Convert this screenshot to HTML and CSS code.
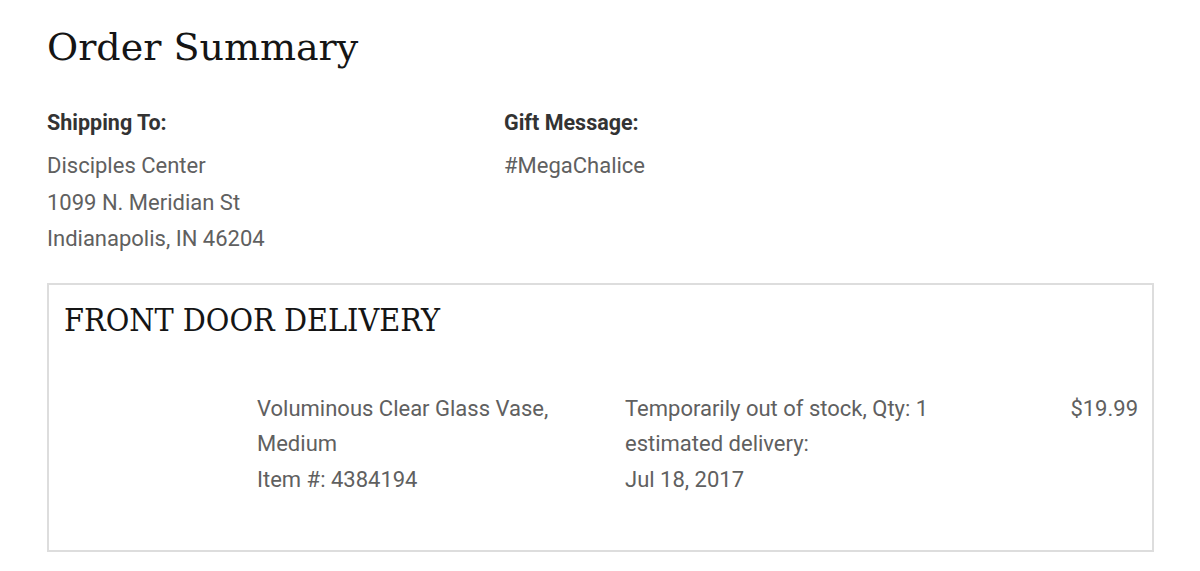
FILE: index.html
```html
<!DOCTYPE html>
<html lang="en">
<head>
  <meta charset="UTF-8">
  <meta name="viewport" content="width=device-width, initial-scale=1.0">
  <link rel="stylesheet" href="styles.css">
  <title>Order Summary</title>
</head>
<body>

  <div class="summary_wrap">

    <h1 class="summary_title">Order Summary</h1>

    <!-- address and gift message -->
    <section class="summary_info">
      <div class="info_col">
        <h3 class="info_label">Shipping To:</h3>
        <p class="info_text">Disciples Center<br>1099 N. Meridian St<br>Indianapolis, IN 46204</p>
      </div>
      <div class="info_col">
        <h3 class="info_label">Gift Message:</h3>
        <p class="info_text">#MegaChalice</p>
      </div>
    </section>

    <!-- shipment box -->
    <section class="shipment_box">
      <h2 class="shipment_title">FRONT DOOR DELIVERY</h2>

      <div class="item_row">
        <div class="item_thumb"></div>
        <p class="item_name">Voluminous Clear Glass Vase,<br>Medium<br>Item #: 4384194</p>
        <p class="item_status">Temporarily out of stock, Qty: 1<br>estimated delivery:<br>Jul 18, 2017</p>
        <p class="item_price">$19.99</p>
      </div>
    </section>

  </div>

</body>
</html>
```

FILE: styles.css
```css
body,h1,h2,h3,p{
  margin:0px; padding:0px;
}

body{
  background:#fff; font-family:Roboto, "Liberation Sans", sans-serif; color:#606060;
}

.summary_wrap{
  width:1107px; padding:22px 0px 0px 47px;
}

.summary_title{
  font-family:"DejaVu Serif", "Liberation Serif", serif; font-weight:normal;
  font-size:38px; line-height:50px; color:#151515;
}

.summary_info{
  display:grid; grid-template-columns:457px 1fr; margin-top:38px;
}

.info_label{
  font-size:21.5px; font-weight:bold; color:#333; line-height:26px;
}

.info_text{
  font-size:22px; line-height:36.5px; margin-top:12px;
}

.shipment_box{
  margin-top:25px; height:265px; border:2px solid #ddd; padding:0px 14px 0px 15px;
}

.shipment_title{
  font-family:"DejaVu Serif", "Liberation Serif", serif; font-weight:normal; font-stretch:condensed;
  font-size:32px; line-height:40px; color:#151515; margin-top:15px;
}

.item_row{
  display:grid; grid-template-columns:193px 368px 1fr auto; margin-top:51px;
}

.item_name,.item_status,.item_price{
  font-size:22px; line-height:35.5px;
}
```
